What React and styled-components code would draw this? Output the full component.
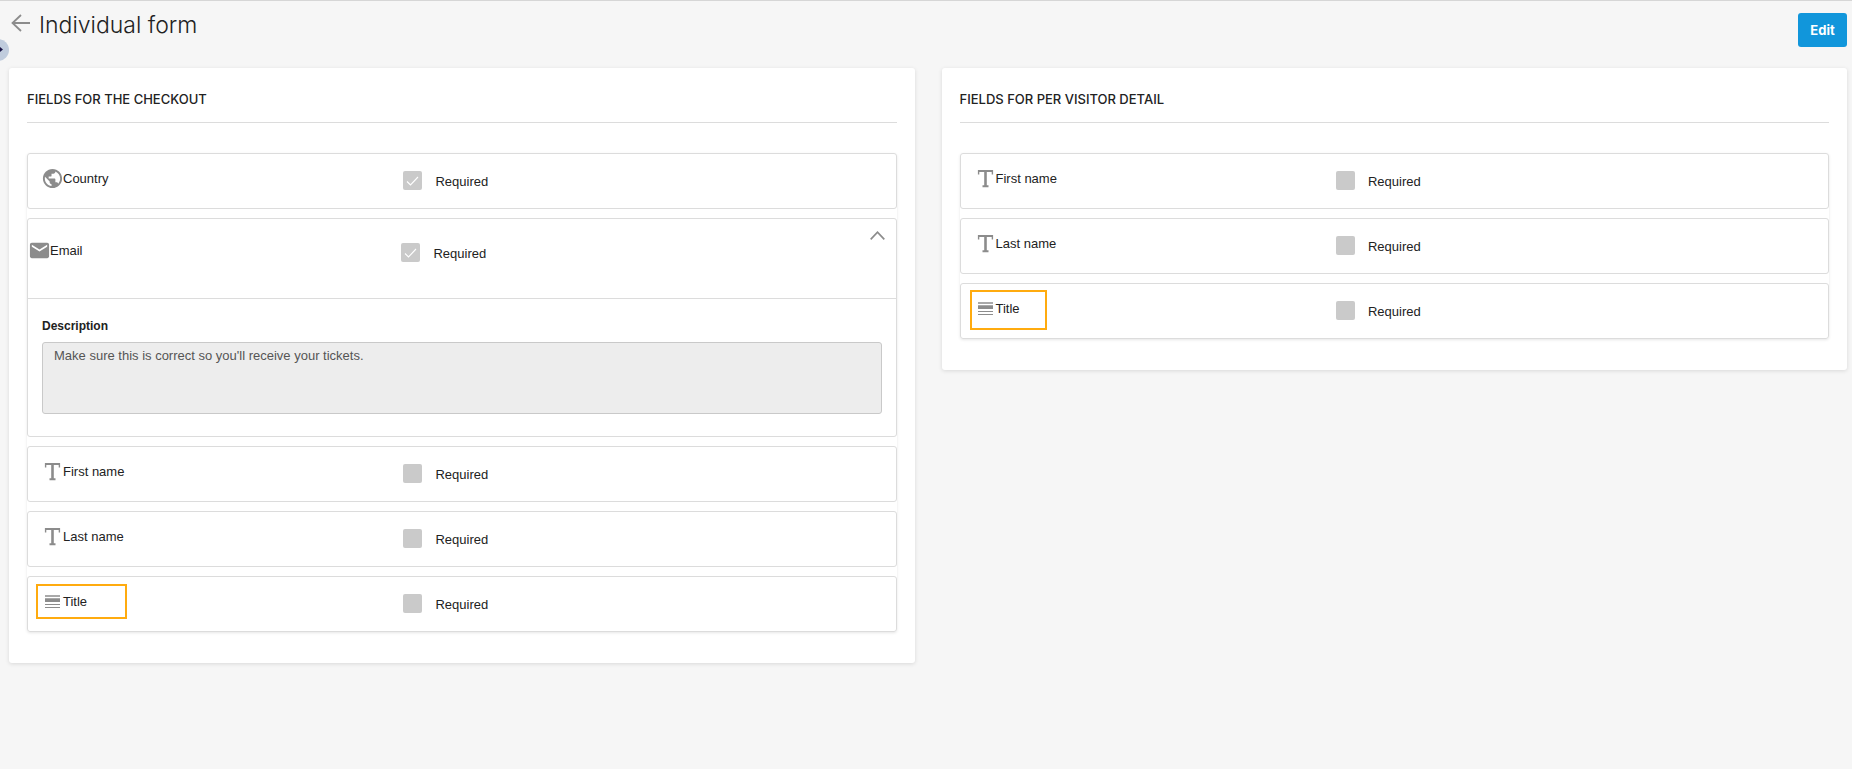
import React from 'react';
import styled, { createGlobalStyle } from 'styled-components';
import { MdEmail, MdPublic } from 'react-icons/md';

const checkoutFields = [
  { id: 'country', label: 'Country', icon: 'globe', required: true },
  {
    id: 'email',
    label: 'Email',
    icon: 'mail',
    required: true,
    description: "Make sure this is correct so you'll receive your tickets.",
  },
  { id: 'first-name', label: 'First name', icon: 'text' },
  { id: 'last-name', label: 'Last name', icon: 'text' },
  { id: 'title', label: 'Title', icon: 'list', mark: { width: 91, height: 35, left: 8, top: 7 } },
];

const visitorFields = [
  { id: 'first-name', label: 'First name', icon: 'text' },
  { id: 'last-name', label: 'Last name', icon: 'text' },
  { id: 'title', label: 'Title', icon: 'list', mark: { width: 77, height: 40, left: 9, top: 6 } },
];

const TextIcon = () => (
  <svg width="23" height="23" viewBox="0 0 23 23" fill="none" stroke="currentColor" aria-hidden="true">
    <path d="M4 4H19M8.5 19.2H14.5" strokeWidth="2" />
    <path d="M4.6 3V7.5M18.4 3V7.5" strokeWidth="1.4" />
    <path d="M11.5 4V19.5" strokeWidth="2.6" />
  </svg>
);

const ListIcon = () => (
  <svg width="23" height="23" viewBox="0 0 23 23" fill="currentColor" aria-hidden="true">
    <rect x="4" y="5" width="15" height="2" opacity="0.75" />
    <rect x="4" y="8" width="15" height="1" opacity="0.75" />
    <rect x="4" y="9" width="15" height="3" />
    <rect x="4" y="14" width="15" height="1" />
    <rect x="4" y="17" width="15" height="1" />
  </svg>
);

const icons = {
  globe: <MdPublic size={23} aria-hidden="true" />,
  mail: <MdEmail size={23} aria-hidden="true" />,
  text: <TextIcon />,
  list: <ListIcon />,
};

const Required = ({ id, checked }) => (
  <RequiredLabel htmlFor={id}>
    <Box>
      <Checkbox id={id} type="checkbox" defaultChecked={checked} disabled />
      {checked && (
        <svg width="19" height="19" viewBox="0 0 19 19" fill="none" stroke="#fff" aria-hidden="true">
          <path d="M4 10.5L7.5 14L15 6" strokeWidth="1.1" />
        </svg>
      )}
    </Box>
    Required
  </RequiredLabel>
);

const Field = ({ prefix, field: { id, label, icon, required, description, mark } }) => {
  const key = `${prefix}-${id}`;
  return (
    <Card>
      <Row $open={!!description}>
        <Name>
          {icons[icon]}
          {label}
        </Name>
        <Required id={`${key}-required`} checked={!!required} />
        {description && (
          <Toggle type="button" aria-label="Collapse" aria-expanded="true">
            <svg width="15" height="9" viewBox="0 0 15 9" fill="none" stroke="currentColor" aria-hidden="true">
              <path d="M0.7 8.3L7.5 1.2L14.3 8.3" strokeWidth="1.7" />
            </svg>
          </Toggle>
        )}
      </Row>
      {description && (
        <Details>
          <label htmlFor={`${key}-description`}>Description</label>
          <textarea id={`${key}-description`} defaultValue={description} disabled />
        </Details>
      )}
      {mark && <Mark $mark={mark} />}
    </Card>
  );
};

const FieldPanel = ({ title, prefix, fields }) => (
  <Panel>
    <PanelTitle>{title}</PanelTitle>
    <List>
      {fields.map(field => (
        <Field key={field.id} prefix={prefix} field={field} />
      ))}
    </List>
  </Panel>
);

const App = () => {
  return (
    <Page>
      <GlobalStyle />
      <SidebarHandle type="button" aria-label="Open sidebar">
        <svg width="22" height="22" viewBox="0 0 22 22" fill="none" stroke="#1b1747" aria-hidden="true">
          <path d="M10 7L14 10.5L10 14" strokeWidth="2.6" />
        </svg>
      </SidebarHandle>
      <Header>
        <BackLink href="#" aria-label="Back">
          <svg width="20" height="18" viewBox="0 0 20 18" fill="none" stroke="currentColor" aria-hidden="true">
            <path d="M11 1L2.5 9L11 17M2.5 9H20" strokeWidth="1.8" />
          </svg>
        </BackLink>
        <h1>Individual form</h1>
        <EditButton type="button">Edit</EditButton>
      </Header>
      <Columns>
        <FieldPanel title="FIELDS FOR THE CHECKOUT" prefix="checkout" fields={checkoutFields} />
        <FieldPanel title="FIELDS FOR PER VISITOR DETAIL" prefix="visitor" fields={visitorFields} />
      </Columns>
    </Page>
  );
};

const GlobalStyle = createGlobalStyle`
  *, *::before, *::after {
    box-sizing: border-box;
  }
  body {
    margin: 0;
    background: #f6f6f6;
    color: #222;
    font: 13px/20px "Liberation Sans", Arial, sans-serif;
  }
  h1, h2, ul {
    margin: 0;
    padding: 0;
  }
  svg {
    display: block;
    flex-shrink: 0;
  }
`;

const Page = styled.main`
  position: relative;
  min-height: 100vh;
  overflow: hidden;
  border-top: 1px solid #d6d6d6;
`;

const SidebarHandle = styled.button`
  position: absolute;
  left: -13px;
  top: 38px;
  width: 22px;
  height: 22px;
  padding: 0;
  border: 0;
  border-radius: 50%;
  background: #c0ccdd;
`;

const Header = styled.header`
  display: flex;
  align-items: flex-start;
  padding: 12px 5px 21px 10px;
  h1 {
    flex: 1;
    margin-left: 9px;
    font: 300 23px/24px Inter, sans-serif;
  }
`;

const BackLink = styled.a`
  padding-top: 1px;
  color: #8c8c8c;
`;

const EditButton = styled.button`
  min-width: 49px;
  height: 34px;
  padding: 0 12px;
  border: 0;
  border-radius: 3px;
  background: #1196db;
  color: #fff;
  font: 700 13px/20px Inter, sans-serif;
`;

const Columns = styled.div`
  display: grid;
  grid-template-columns: 1fr 1fr;
  align-items: start;
  gap: 27px;
  padding: 0 5px 0 9px;
`;

const Panel = styled.section`
  padding: 18px 18px 31px;
  border-radius: 3px;
  background: #fff;
  box-shadow: 0 1px 4px rgba(0, 0, 0, 0.12);
`;

const PanelTitle = styled.h2`
  margin-bottom: 30px;
  padding-bottom: 9px;
  border-bottom: 1px solid #dcdcdc;
  font: 500 13px/27px Inter, sans-serif;
`;

const List = styled.ul`
  display: grid;
  gap: 9px;
  list-style: none;
  border-radius: 3px;
  box-shadow: 0 1px 3px rgba(0, 0, 0, 0.1);
  background: #fff;
`;

const Card = styled.li`
  position: relative;
  border: 1px solid #dcdcdc;
  border-radius: 3px;
  background: #fff;
`;

const RequiredLabel = styled.label`
  display: flex;
  gap: 13px;
  line-height: 22px;
`;

const Name = styled.div`
  display: flex;
  align-items: center;
  svg {
    margin-right: -1px;
    color: #8c8c8c;
  }
`;

const Row = styled.div`
  position: relative;
  display: grid;
  grid-template-columns: 5fr 7fr;
  align-items: start;
  height: ${({ $open }) => ($open ? 79 : 54)}px;
  padding-top: ${({ $open }) => ($open ? 20 : 13)}px;
  ${Name} {
    padding-left: ${({ $open }) => ($open ? 0 : 13)}px;
  }
  ${RequiredLabel} {
    padding-top: 4px;
    padding-left: ${({ $open }) => ($open ? 12 : 14)}px;
  }
`;

const Box = styled.span`
  position: relative;
  width: 19px;
  height: 19px;
  svg {
    position: absolute;
    inset: 0;
  }
`;

const Checkbox = styled.input`
  display: block;
  appearance: none;
  width: 19px;
  height: 19px;
  margin: 0;
  border-radius: 2px;
  background: #cacaca;
`;

const Toggle = styled.button`
  position: absolute;
  top: 8px;
  right: 7px;
  padding: 4px;
  border: 0;
  background: none;
  color: #8c8c8c;
`;

const Details = styled.div`
  padding: 17px 14px 22px;
  border-top: 1px solid #dcdcdc;
  label {
    display: block;
    margin-bottom: 6px;
    font-size: 12px;
    font-weight: 700;
  }
  textarea {
    display: block;
    width: 100%;
    height: 72px;
    padding: 3px 11px;
    border: 1px solid #c9c9c9;
    border-radius: 3px;
    background: #ededed;
    color: #555;
    font: inherit;
    resize: none;
  }
`;

const Mark = styled.span`
  position: absolute;
  left: ${({ $mark }) => $mark.left}px;
  top: ${({ $mark }) => $mark.top}px;
  width: ${({ $mark }) => $mark.width}px;
  height: ${({ $mark }) => $mark.height}px;
  border: 2px solid #ffab0f;
`;

export default App;
